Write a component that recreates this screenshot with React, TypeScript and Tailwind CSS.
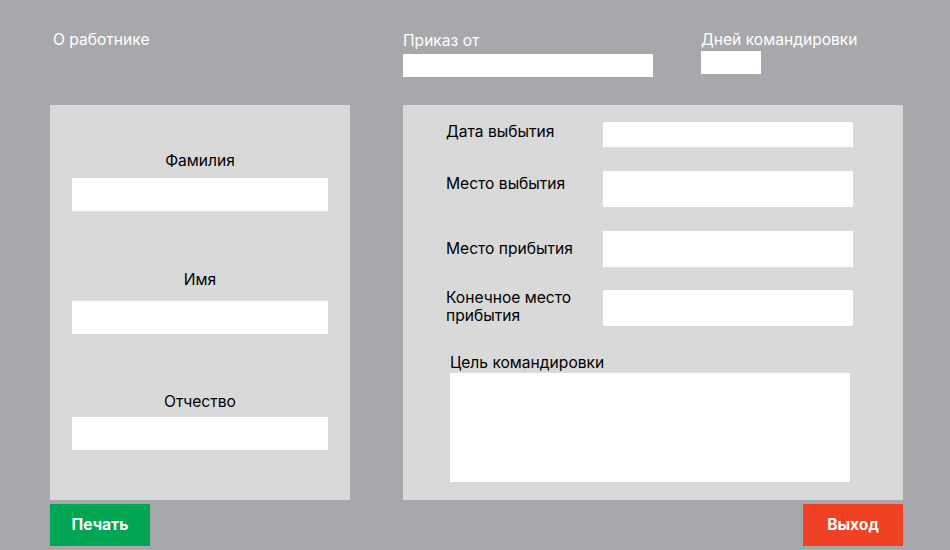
import React from "react";

const font = { fontFamily: "Inter, 'Noto Sans', sans-serif" };

const rows = [
  { label: "Дата выбытия", top: "mt-[17px]", h: "h-[25px]", lt: "mt-[1px]" },
  { label: "Место выбытия", top: "mt-[24px]", h: "h-[36px]", lt: "mt-[4px]" },
  { label: "Место прибытия", top: "mt-[24px]", h: "h-[36px]", lt: "mt-[9px]" },
  { label: "Конечное место прибытия", top: "mt-[23px]", h: "h-[36px]", lt: "-mt-[1px]" },
];

const App = () => {
  return (
    <div
      className="w-[950px] h-[550px] bg-[#a7a8ac] text-[15.6px] leading-[18px] overflow-hidden"
      style={font}
    >
      {/* top bar */}
      <div className="flex h-[105px] pl-[53px]">
        <div className="w-[350px] pt-[31px] text-white">О работнике</div>
        <div className="w-[298px] pt-[32px] text-white">
          <div>Приказ от</div>
          <div className="mt-[4px] w-[250px] h-[23px] bg-white" />
        </div>
        <div className="pt-[31px] text-white">
          <div>Дней командировки</div>
          <div className="mt-[2px] w-[60px] h-[23px] bg-white" />
        </div>
      </div>

      <div className="flex pl-[50px] gap-[53px]">
        {/* left panel */}
        <div className="w-[300px] h-[395px] bg-[#d9d9d9] flex flex-col items-center text-black">
          <div className="mt-[47px]">Фамилия</div>
          <div className="mt-[8px] w-[256px] h-[33px] bg-white" />
          <div className="mt-[60px]">Имя</div>
          <div className="mt-[12px] w-[256px] h-[33px] bg-white" />
          <div className="mt-[59px]">Отчество</div>
          <div className="mt-[6px] w-[256px] h-[33px] bg-white" />
        </div>

        {/* right panel */}
        <div className="w-[500px] h-[395px] bg-[#d9d9d9] text-black pl-[43px]">
          {rows.map((r, i) => (
            <div key={i} className={`flex ${r.top}`}>
              <div className={`w-[157px] ${r.lt}`}>{r.label}</div>
              <div className={`w-[250px] ${r.h} bg-white`} />
            </div>
          ))}
          <div className="ml-[4px] mt-[28px]">Цель командировки</div>
          <div className="ml-[4px] mt-[1px] w-[400px] h-[109px] bg-white" />
        </div>
      </div>

      {/* buttons */}
      <div className="flex justify-between pl-[50px] pr-[47px] mt-[4px]">
        <button className="w-[100px] h-[42px] bg-[#00a651] text-white font-bold">
          Печать
        </button>
        <button className="w-[100px] h-[42px] bg-[#ef4123] text-white font-bold">
          Выход
        </button>
      </div>
    </div>
  );
};

export default App;
